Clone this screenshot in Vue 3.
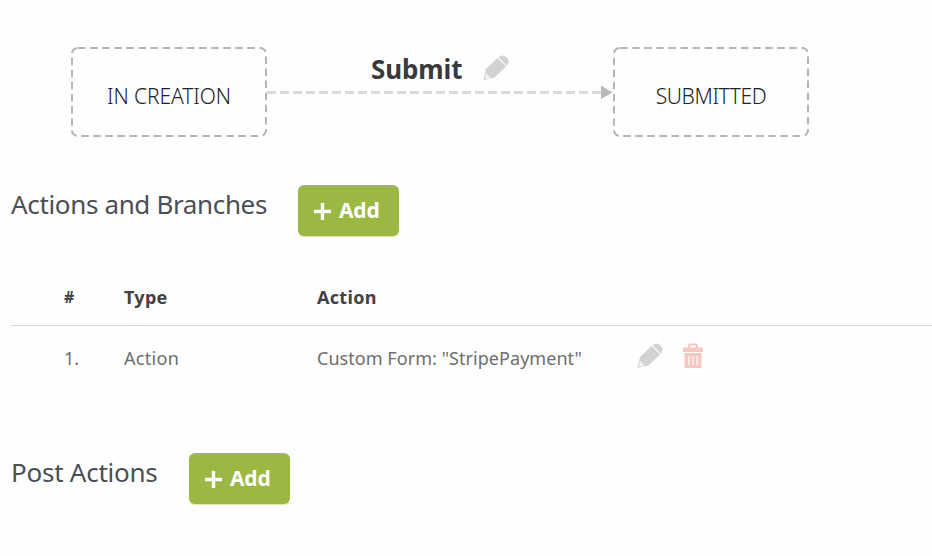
<template>
  <div class="workflow">
    <div class="flow">
      <div class="state">
        <svg class="outline" viewBox="0 0 196 90">
          <rect x="1" y="1" width="194" height="88" rx="6" />
        </svg>
        <span class="state-name creation">IN CREATION</span>
      </div>
      <div class="transition">
        <div class="transition-title">
          <span class="transition-name">Submit</span>
          <svg class="pencil" viewBox="0 0 26 26">
            <path class="body" d="M0.5 25 L3 14 L14.5 3 L23 11.5 L11.5 22.5 Z" />
            <path class="body" d="M15.5 2.3 L17.5 1 Q20.5 -0.5 23 2 L24.5 3.5 Q26.5 6.5 25 9 L23.8 10.8 Z" />
            <path class="tip" d="M3 18 L8 22.8 L2.6 24 L1.8 23 Z" />
          </svg>
        </div>
        <svg class="arrow" viewBox="0 0 346 16">
          <path class="arrow-line" d="M0 8.5 H334" />
          <path class="arrow-head" d="M334 1.5 L345.5 8.5 L334 15 Z" />
        </svg>
      </div>
      <div class="state">
        <svg class="outline" viewBox="0 0 196 90">
          <rect x="1" y="1" width="194" height="88" rx="6" />
        </svg>
        <span class="state-name submitted">SUBMITTED</span>
      </div>
    </div>

    <div class="section-header">
      <h2 class="branches-title">Actions and Branches</h2>
      <button class="add-btn" type="button">
        <svg class="plus" viewBox="0 0 18 18"><path d="M9 0 V18 M0 9 H18" /></svg>
        <span>Add</span>
      </button>
    </div>

    <div class="table">
      <div class="row head">
        <span class="hash">#</span>
        <span class="type">Type</span>
        <span class="type">Action</span>
      </div>
      <div v-for="(item, index) in actions" :key="index" class="row">
        <span>{{ index + 1 }}.</span>
        <span class="type">{{ item.type }}</span>
        <span class="action">{{ item.action }}</span>
        <span class="tools">
          <svg class="pencil" viewBox="0 0 26 26">
            <path class="body" d="M0.5 25 L3 14 L14.5 3 L23 11.5 L11.5 22.5 Z" />
            <path class="body" d="M15.5 2.3 L17.5 1 Q20.5 -0.5 23 2 L24.5 3.5 Q26.5 6.5 25 9 L23.8 10.8 Z" />
            <path class="tip" d="M3 18 L8 22.8 L2.6 24 L1.8 23 Z" />
          </svg>
          <svg class="trash" viewBox="0 0 20 26">
            <path class="handle" d="M6 5 V3 Q6 1.5 7.5 1.5 H12.5 Q14 1.5 14 3 V5" />
            <path class="can" d="M0 4.5 H20 V9 H0 Z M1.5 10 H18.5 V25 H1.5 Z" />
            <path class="slots" d="M5.8 13 V22 M10 13 V22 M14.2 13 V22" />
          </svg>
        </span>
      </div>
    </div>

    <div class="section-header post">
      <h2 class="post-title">Post Actions</h2>
      <button class="add-btn" type="button">
        <svg class="plus" viewBox="0 0 18 18"><path d="M9 0 V18 M0 9 H18" /></svg>
        <span>Add</span>
      </button>
    </div>
  </div>
</template>

<script setup>
import { ref } from 'vue'

const actions = ref([
  { type: 'Action', action: 'Custom Form: "StripePayment"' },
])
</script>

<style>
body {
  background: #fefefe;
  overflow: hidden;
}
</style>

<style scoped>
.workflow {
  box-sizing: border-box;
  height: 556px;
  padding: 47px 0 0 11px;
  font-family: 'Noto Sans', 'Open Sans', sans-serif;
  color: #4b4f54;
  white-space: nowrap;
}

.flow {
  display: flex;
  height: 90px;
  padding-left: 60px;
}

.state {
  position: relative;
  display: flex;
  flex: none;
  align-items: center;
  justify-content: center;
  width: 196px;
  height: 90px;
}

.outline {
  position: absolute;
  inset: 0;
  width: 196px;
  height: 90px;
}

.outline rect {
  fill: none;
  stroke: #b5b5b5;
  stroke-width: 2;
  stroke-dasharray: 7.5 4.6;
}

.state-name {
  padding-top: 8px;
  font-size: 21px;
  font-weight: 300;
  line-height: 28px;
  color: #222;
}

.creation {
  letter-spacing: -0.1px;
}

.submitted {
  letter-spacing: -0.4px;
}

.transition {
  flex: none;
  width: 346px;
}

.transition-title {
  display: flex;
  align-items: center;
  gap: 21px;
  height: 37px;
  padding: 0 0 0 104px;
}

.transition-name {
  padding-top: 6px;
  font-size: 26px;
  font-weight: 700;
  line-height: 34px;
  letter-spacing: -0.1px;
  color: #3a3a3a;
}

.pencil {
  flex: none;
  width: 26px;
  height: 26px;
}

.transition-title .pencil {
  margin-top: 5px;
}

.body {
  fill: #d2d2d2;
}

.tip {
  fill: #f0f0f0;
}

.arrow {
  display: block;
  width: 346px;
  height: 16px;
}

.arrow-line {
  stroke: #dadada;
  stroke-width: 3;
  stroke-dasharray: 9 4;
}

.arrow-head {
  fill: #bababa;
}

.section-header {
  display: flex;
  align-items: flex-start;
  gap: 32px;
  margin-top: 48px;
}

h2 {
  margin: 1px 0 0;
  font-size: 26px;
  font-weight: 400;
  line-height: 36px;
}

.branches-title {
  width: 255px;
  letter-spacing: -0.35px;
}

.post-title {
  width: 146px;
  letter-spacing: -0.25px;
}

.add-btn {
  box-sizing: border-box;
  display: flex;
  align-items: center;
  gap: 8px;
  width: 101px;
  height: 51px;
  padding: 0 0 3px 16px;
  border: 0;
  border-top: 2px solid #a3af80;
  border-radius: 6px;
  background: #9bb843;
  box-shadow: 0 1px 1px #dcea9c;
  font-family: inherit;
  font-size: 21px;
  font-weight: 700;
  color: #fff;
}

.add-btn span {
  letter-spacing: -0.2px;
}

.plus {
  width: 17px;
  height: 17px;
  margin-top: 3px;
}

.plus path {
  stroke: #fff;
  stroke-width: 3.6;
}

.table {
  margin-top: 33px;
}

.row {
  display: grid;
  grid-template-columns: 60px 193px 320px auto;
  align-items: center;
  height: 64px;
  padding-left: 53px;
  font-size: 18px;
  letter-spacing: 0.05px;
  color: #6c6e70;
}

.head {
  height: 55px;
  padding-bottom: 1px;
  border-bottom: 1px solid #d6d6d6;
  font-weight: 700;
  color: #404244;
}

.type {
  letter-spacing: 0.3px;
}

.hash {
  font-size: 16px;
}

.tools {
  display: flex;
  gap: 20px;
  margin-top: -5px;
}

.trash {
  width: 20px;
  height: 26px;
}

.handle {
  fill: none;
  stroke: #f3c5c1;
  stroke-width: 2;
}

.can {
  fill: #f5c8c4;
}

.slots {
  stroke: #fdeeec;
  stroke-width: 1.6;
}

.post {
  margin-top: 63px;
}
</style>
